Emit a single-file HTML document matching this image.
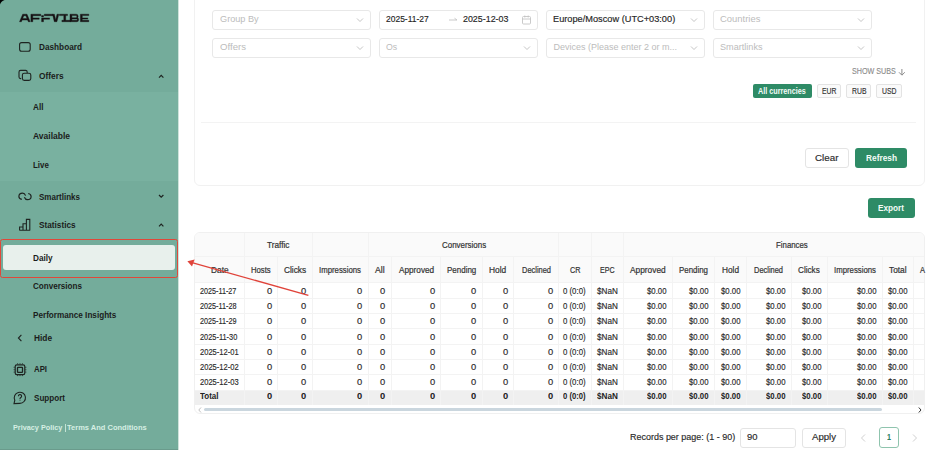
<!DOCTYPE html>
<html><head><meta charset="utf-8"><style>
html,body{margin:0;padding:0;}
body{width:940px;height:450px;overflow:hidden;position:relative;background:#fff;font-family:"Liberation Sans",sans-serif;}
.t{position:absolute;white-space:nowrap;line-height:1;transform-origin:0 50%;}
.b{position:absolute;}
</style></head><body>
<div class="b" style="left:0.00px;top:0.00px;width:178.00px;height:450.00px;background:#74ac9b;"></div>
<div class="b" style="left:0.00px;top:92.00px;width:178.00px;height:89.30px;background:#79b1a0;"></div>
<div class="b" style="left:178.00px;top:0.00px;width:1.00px;height:450.00px;background:#cfe3db;"></div>
<div class="b" style="left:0.00px;top:449.00px;width:178.00px;height:1.00px;background:#6a9b8c;"></div>
<svg class="b" style="left:0;top:0" width="6" height="6"><path d="M0 0H4.6Q1 1 0 4.6Z" fill="#000"/></svg>
<svg class="b" style="left:0;top:0" width="100" height="30" fill="#161214" stroke="#161214" stroke-width="0.4" stroke-linejoin="miter">
<path fill-rule="evenodd" d="M19.5 21.7L22.7 14.2H27L30.2 21.7H28.3L27.6 20H22.1L21.4 21.7ZM22.7 18.6H27L25.9 15.7H23.8Z"/>
<path d="M30.9 14.2h9.9v1.5h-8v2.2h6.4v1.3h-6.4v2.5h-1.9Z"/>
<path d="M41.6 17.9h8v1.3h-6.1v2.5h-1.9ZM41.6 15.6h1.9v1.4h-1.9ZM44.3 14.2h8.6v1.5h-8.6Z"/>
<path d="M52.5 14.2H54.4L55.7 20L57 14.2H58.8L56.9 21.7H54.3Z"/>
<path d="M59.4 14.2h8.1v1.4h-1.8v4.7h4.8v1.4h-8.6v-1.4h1.9v-4.7h-4.4Z"/>
<path fill-rule="evenodd" d="M70 14.2h6.2a1.9 1.9 0 0 1 1.9 1.9v0.6a1.2 1.2 0 0 1-0.6 1.1a1.5 1.5 0 0 1 1.1 1.4v0.8a1.7 1.7 0 0 1-1.7 1.7h-6.9ZM71.9 15.6v2.1h4.3a0.6 0.6 0 0 0 0.6-0.6v-0.9a0.6 0.6 0 0 0-0.6-0.6ZM71.9 19v1.3h4.9a0.5 0.5 0 0 0 0.5-0.5v-0.3a0.5 0.5 0 0 0-0.5-0.5Z"/>
<path d="M80.4 14.2h8.4v1.4h-6.5v2.3h5.5v1.2h-5.5v1.2h6.5v1.4h-8.4Z"/>
</svg>
<svg class="b" style="left:0;top:0" width="178" height="450" fill="none" stroke="#1e2421" stroke-width="1.1">
<rect x="19.6" y="42.6" width="10.6" height="8.6" rx="2"/>
<rect x="22.4" y="73.2" width="8.4" height="7.2" rx="1.8"/>
<path d="M21.2 78.6h-0.6a1.6 1.6 0 0 1-1.6-1.6v-5a1.6 1.6 0 0 1 1.6-1.6h5a1.6 1.6 0 0 1 1.6 1.6v1"/>
<path d="M159 77.6l2.2-2.2 2.2 2.2" stroke-width="1.2"/>
<path d="M21.8 199.3C19.8 198.9 18.9 197.8 18.9 196.4C18.9 194.5 20.6 193.2 22.6 193.2C24.1 193.2 25 194.1 25.6 195.6M24.4 197.2C25 198.7 25.9 199.6 27.4 199.6C29.4 199.6 31.1 198.3 31.1 196.4C31.1 195 30.2 193.9 28.2 193.5" stroke-width="1.2"/>
<path d="M159 195l2.2 2.2 2.2-2.2" stroke-width="1.2"/>
<path d="M19.6 230.2v-3.2h3.4v3.2M23 230.2v-6.4h3.4v6.4M26.4 230.2v-10.8h3.4v10.8M19.4 230.2h10.8"/>
<path d="M159 226.4l2.2-2.2 2.2 2.2" stroke-width="1.2"/>
<path d="M21.4 334.8l-3 3.2 3 3.2" stroke-width="1.1"/>
<rect x="15.2" y="364.8" width="9.6" height="9.8" rx="1.6" stroke-width="1.2"/>
<path d="M17.6 364.2v-0.9M20 364.2v-0.9M22.4 364.2v-0.9M17.6 375.2v0.9M20 375.2v0.9M22.4 375.2v0.9M14.6 367.3h-0.9M14.6 369.7h-0.9M14.6 372.1h-0.9M25.4 367.3h0.9M25.4 369.7h0.9M25.4 372.1h0.9" stroke-width="0.9"/>
<rect x="17.5" y="367.3" width="5" height="5" rx="0.6" stroke-width="1.3"/>
<path d="M19.8 403.4a5.6 5.6 0 1 0 -5-3.2l-0.8 3.4z"/>
<path d="M18.4 396.2a1.6 1.6 0 1 1 2.4 1.4c-0.5 0.3-0.8 0.6-0.8 1.2v0.4M20 400.6v0.3"/>
</svg>
<div class="t" style="left:39.00px;top:42.70px;font-size:8.8px;color:#1b1d1c;font-weight:bold;transform:scaleX(0.9355);">Dashboard</div>
<div class="t" style="left:39.00px;top:71.70px;font-size:8.8px;color:#1b1d1c;font-weight:bold;transform:scaleX(0.9491);">Offers</div>
<div class="t" style="left:33.00px;top:103.10px;font-size:8.8px;color:#1b1d1c;font-weight:bold;transform:scaleX(0.9249);">All</div>
<div class="t" style="left:33.00px;top:131.90px;font-size:8.8px;color:#1b1d1c;font-weight:bold;transform:scaleX(0.9657);">Available</div>
<div class="t" style="left:33.00px;top:161.30px;font-size:8.8px;color:#1b1d1c;font-weight:bold;transform:scaleX(0.8973);">Live</div>
<div class="t" style="left:39.00px;top:192.90px;font-size:8.8px;color:#1b1d1c;font-weight:bold;transform:scaleX(0.9112);">Smartlinks</div>
<div class="t" style="left:39.00px;top:221.30px;font-size:8.8px;color:#1b1d1c;font-weight:bold;transform:scaleX(0.9354);">Statistics</div>
<div class="b" style="left:0.00px;top:239.20px;width:178.40px;height:38.40px;border:1.5px solid #e0483a;border-radius:2.5px;box-sizing:border-box;"></div>
<div class="b" style="left:2.80px;top:244.60px;width:172.40px;height:25.40px;background:#e8f0ec;border-radius:3px;"></div>
<div class="t" style="left:33.40px;top:253.50px;font-size:8.8px;color:#1b1d1c;font-weight:bold;transform:scaleX(0.9319);">Daily</div>
<div class="t" style="left:33.00px;top:282.30px;font-size:8.8px;color:#1b1d1c;font-weight:bold;transform:scaleX(0.9193);">Conversions</div>
<div class="t" style="left:33.00px;top:310.70px;font-size:8.8px;color:#1b1d1c;font-weight:bold;transform:scaleX(0.9268);">Performance Insights</div>
<div class="t" style="left:34.00px;top:333.70px;font-size:8.8px;color:#1b1d1c;font-weight:bold;transform:scaleX(0.9439);">Hide</div>
<div class="t" style="left:34.00px;top:365.30px;font-size:8.8px;color:#1b1d1c;font-weight:bold;transform:scaleX(0.8862);">API</div>
<div class="t" style="left:34.00px;top:393.70px;font-size:8.8px;color:#1b1d1c;font-weight:bold;transform:scaleX(0.9191);">Support</div>
<div class="t" style="left:13.00px;top:424.09px;font-size:8px;color:#d6efe3;font-weight:bold;transform:scaleX(0.9105);">Privacy Policy</div>
<div class="b" style="left:64.80px;top:424.40px;width:0.70px;height:7.40px;background:#c4e3d5;"></div>
<div class="t" style="left:67.00px;top:424.09px;font-size:8px;color:#d6efe3;font-weight:bold;transform:scaleX(0.9389);">Terms And Conditions</div>
<div class="b" style="left:194.40px;top:-10.00px;width:730.20px;height:195.60px;border:1px solid #f1f1f1;border-radius:6px;box-sizing:border-box;background:#fff;"></div>
<div class="b" style="left:212.40px;top:9.60px;width:158.80px;height:20.00px;border:1px solid #e8e8e8;border-radius:3px;box-sizing:border-box;"></div>
<svg class="b" style="left:356.20px;top:15.60px" width="8" height="8" fill="none" stroke="#bdbdbd" stroke-width="0.9"><path d="M1 2.5l3 3 3-3"/></svg>
<div class="b" style="left:212.40px;top:37.60px;width:158.80px;height:20.00px;border:1px solid #e8e8e8;border-radius:3px;box-sizing:border-box;"></div>
<svg class="b" style="left:356.20px;top:43.60px" width="8" height="8" fill="none" stroke="#bdbdbd" stroke-width="0.9"><path d="M1 2.5l3 3 3-3"/></svg>
<div class="b" style="left:379.20px;top:9.60px;width:158.80px;height:20.00px;border:1px solid #e8e8e8;border-radius:3px;box-sizing:border-box;"></div>
<div class="b" style="left:379.20px;top:37.60px;width:158.80px;height:20.00px;border:1px solid #e8e8e8;border-radius:3px;box-sizing:border-box;"></div>
<svg class="b" style="left:523.00px;top:43.60px" width="8" height="8" fill="none" stroke="#bdbdbd" stroke-width="0.9"><path d="M1 2.5l3 3 3-3"/></svg>
<div class="b" style="left:545.80px;top:9.60px;width:158.80px;height:20.00px;border:1px solid #e8e8e8;border-radius:3px;box-sizing:border-box;"></div>
<svg class="b" style="left:689.60px;top:15.60px" width="8" height="8" fill="none" stroke="#bdbdbd" stroke-width="0.9"><path d="M1 2.5l3 3 3-3"/></svg>
<div class="b" style="left:545.80px;top:37.60px;width:158.80px;height:20.00px;border:1px solid #e8e8e8;border-radius:3px;box-sizing:border-box;"></div>
<svg class="b" style="left:689.60px;top:43.60px" width="8" height="8" fill="none" stroke="#bdbdbd" stroke-width="0.9"><path d="M1 2.5l3 3 3-3"/></svg>
<div class="b" style="left:712.80px;top:9.60px;width:158.80px;height:20.00px;border:1px solid #e8e8e8;border-radius:3px;box-sizing:border-box;"></div>
<svg class="b" style="left:856.60px;top:15.60px" width="8" height="8" fill="none" stroke="#bdbdbd" stroke-width="0.9"><path d="M1 2.5l3 3 3-3"/></svg>
<div class="b" style="left:712.80px;top:37.60px;width:158.80px;height:20.00px;border:1px solid #e8e8e8;border-radius:3px;box-sizing:border-box;"></div>
<svg class="b" style="left:856.60px;top:43.60px" width="8" height="8" fill="none" stroke="#bdbdbd" stroke-width="0.9"><path d="M1 2.5l3 3 3-3"/></svg>
<div class="t" style="left:219.70px;top:15.10px;font-size:9px;color:#bcbcbc;transform:scaleX(1.0179);">Group By</div>
<div class="t" style="left:219.70px;top:43.10px;font-size:9px;color:#bcbcbc;transform:scaleX(1.0681);">Offers</div>
<div class="t" style="left:386.30px;top:15.10px;font-size:9px;color:#262626;transform:scaleX(0.9411);-webkit-text-stroke:0.15px currentColor;">2025-11-27</div>
<div class="t" style="left:462.90px;top:15.10px;font-size:9px;color:#262626;transform:scaleX(0.9861);-webkit-text-stroke:0.15px currentColor;">2025-12-03</div>
<svg class="b" style="left:448px;top:16px" width="10" height="6" fill="none" stroke="#c4c4c4" stroke-width="0.9"><path d="M1 4h8M6.5 2.2L9 4"/></svg>
<svg class="b" style="left:521px;top:15px" width="11" height="11" fill="none" stroke="#c4c4c4" stroke-width="0.9"><rect x="1.5" y="1.5" width="8" height="7.5" rx="1"/><path d="M1.5 4h8M3.8 0.5v2M7.2 0.5v2"/></svg>
<div class="t" style="left:386.00px;top:43.10px;font-size:9px;color:#bcbcbc;transform:scaleX(0.9739);">Os</div>
<div class="t" style="left:553.40px;top:15.10px;font-size:9px;color:#262626;transform:scaleX(1.0243);-webkit-text-stroke:0.15px currentColor;">Europe/Moscow (UTC+03:00)</div>
<div class="t" style="left:553.40px;top:43.10px;font-size:9px;color:#bcbcbc;">Devices (Please enter 2 or m...</div>
<div class="t" style="left:720.40px;top:15.10px;font-size:9px;color:#bcbcbc;transform:scaleX(1.0488);">Countries</div>
<div class="t" style="left:720.40px;top:43.10px;font-size:9px;color:#bcbcbc;transform:scaleX(1.0117);">Smartlinks</div>
<div class="t" style="left:852.40px;top:66.90px;font-size:8.4px;color:#8a8a8a;transform:scaleX(0.8570);-webkit-text-stroke:0.12px currentColor;">SHOW SUBS</div>
<svg class="b" style="left:897.7px;top:68px" width="9" height="8" fill="none" stroke="#8a8a8a" stroke-width="1"><path d="M3.9 1v6M1 4.3l2.9 2.9 2.9-2.9"/></svg>
<div class="b" style="left:752.60px;top:84.20px;width:59.00px;height:13.60px;background:#2e8b66;border-radius:2px;"></div>
<div class="t" style="left:758.20px;top:86.80px;font-size:8.6px;color:#f4fbf7;font-weight:bold;transform:scaleX(0.8403);">All currencies</div>
<div class="b" style="left:816.60px;top:84.20px;width:24.30px;height:13.60px;background:#fafafa;border:1px solid #e3e3e3;border-radius:2px;box-sizing:border-box;"></div>
<div class="t" style="left:821.50px;top:86.90px;font-size:8.4px;color:#333;transform:scaleX(0.8176);-webkit-text-stroke:0.15px currentColor;">EUR</div>
<div class="b" style="left:846.30px;top:84.20px;width:24.90px;height:13.60px;background:#fafafa;border:1px solid #e3e3e3;border-radius:2px;box-sizing:border-box;"></div>
<div class="t" style="left:851.50px;top:86.90px;font-size:8.4px;color:#333;transform:scaleX(0.8176);-webkit-text-stroke:0.15px currentColor;">RUB</div>
<div class="b" style="left:876.30px;top:84.20px;width:25.50px;height:13.60px;background:#fafafa;border:1px solid #e3e3e3;border-radius:2px;box-sizing:border-box;"></div>
<div class="t" style="left:881.80px;top:86.90px;font-size:8.4px;color:#333;transform:scaleX(0.8176);-webkit-text-stroke:0.15px currentColor;">USD</div>
<div class="b" style="left:201.00px;top:121.60px;width:715.40px;height:1.00px;background:#f3f3f3;"></div>
<div class="b" style="left:805.30px;top:147.50px;width:43.50px;height:20.50px;background:#fff;border:1px solid #e4e4e4;border-radius:3px;box-sizing:border-box;"></div>
<div class="t" style="left:815.30px;top:153.50px;font-size:8.8px;color:#2a2a2a;transform:scaleX(1.1127);-webkit-text-stroke:0.15px currentColor;">Clear</div>
<div class="b" style="left:855.20px;top:147.50px;width:51.80px;height:20.50px;background:#2e8b66;border-radius:3px;"></div>
<div class="t" style="left:865.60px;top:153.50px;font-size:8.8px;color:#f4fbf7;font-weight:bold;transform:scaleX(0.9460);">Refresh</div>
<div class="b" style="left:867.80px;top:198.40px;width:47.10px;height:20.00px;background:#2e8b66;border-radius:3px;"></div>
<div class="t" style="left:878.30px;top:204.10px;font-size:8.8px;color:#f4fbf7;font-weight:bold;transform:scaleX(0.9329);">Export</div>
<div class="b" style="left:194.4px;top:231.5px;width:730.20px;height:182.70px;border:1px solid #f0f0f0;border-radius:6px;box-sizing:border-box;overflow:hidden;background:#fff;">
</div>
<div class="b" style="left:195.40px;top:232.50px;width:728.20px;height:50.40px;background:#fafafa;border-radius:5px 5px 0 0;"></div>
<div class="b" style="left:195.40px;top:390.00px;width:728.20px;height:15.30px;background:#efefef;"></div>
<div class="b" style="left:195.40px;top:256.20px;width:728.20px;height:1.00px;background:#f3f3f3;"></div>
<div class="b" style="left:195.40px;top:282.40px;width:728.20px;height:1.00px;background:#f3f3f3;"></div>
<div class="b" style="left:195.40px;top:297.70px;width:728.20px;height:1.00px;background:#f3f3f3;"></div>
<div class="b" style="left:195.40px;top:313.00px;width:728.20px;height:1.00px;background:#f3f3f3;"></div>
<div class="b" style="left:195.40px;top:328.30px;width:728.20px;height:1.00px;background:#f3f3f3;"></div>
<div class="b" style="left:195.40px;top:343.60px;width:728.20px;height:1.00px;background:#f3f3f3;"></div>
<div class="b" style="left:195.40px;top:358.90px;width:728.20px;height:1.00px;background:#f3f3f3;"></div>
<div class="b" style="left:195.40px;top:374.20px;width:728.20px;height:1.00px;background:#f3f3f3;"></div>
<div class="b" style="left:195.40px;top:389.50px;width:728.20px;height:1.00px;background:#f3f3f3;"></div>
<div class="b" style="left:243.80px;top:232.50px;width:1.00px;height:172.80px;background:#f3f3f3;"></div>
<div class="b" style="left:277.40px;top:256.70px;width:1.00px;height:148.60px;background:#f3f3f3;"></div>
<div class="b" style="left:311.80px;top:232.50px;width:1.00px;height:172.80px;background:#f3f3f3;"></div>
<div class="b" style="left:368.00px;top:232.50px;width:1.00px;height:172.80px;background:#f3f3f3;"></div>
<div class="b" style="left:390.80px;top:256.70px;width:1.00px;height:148.60px;background:#f3f3f3;"></div>
<div class="b" style="left:440.40px;top:256.70px;width:1.00px;height:148.60px;background:#f3f3f3;"></div>
<div class="b" style="left:481.80px;top:256.70px;width:1.00px;height:148.60px;background:#f3f3f3;"></div>
<div class="b" style="left:513.10px;top:256.70px;width:1.00px;height:148.60px;background:#f3f3f3;"></div>
<div class="b" style="left:558.10px;top:232.50px;width:1.00px;height:172.80px;background:#f3f3f3;"></div>
<div class="b" style="left:591.00px;top:232.50px;width:1.00px;height:172.80px;background:#f3f3f3;"></div>
<div class="b" style="left:623.00px;top:232.50px;width:1.00px;height:172.80px;background:#f3f3f3;"></div>
<div class="b" style="left:672.30px;top:256.70px;width:1.00px;height:148.60px;background:#f3f3f3;"></div>
<div class="b" style="left:714.10px;top:256.70px;width:1.00px;height:148.60px;background:#f3f3f3;"></div>
<div class="b" style="left:745.70px;top:256.70px;width:1.00px;height:148.60px;background:#f3f3f3;"></div>
<div class="b" style="left:790.90px;top:256.70px;width:1.00px;height:148.60px;background:#f3f3f3;"></div>
<div class="b" style="left:826.50px;top:256.70px;width:1.00px;height:148.60px;background:#f3f3f3;"></div>
<div class="b" style="left:882.10px;top:256.70px;width:1.00px;height:148.60px;background:#f3f3f3;"></div>
<div class="b" style="left:913.30px;top:256.70px;width:1.00px;height:148.60px;background:#f3f3f3;"></div>
<div class="t" style="left:266.85px;top:241.00px;font-size:8.6px;color:#333333;transform:scaleX(0.9609);-webkit-text-stroke:0.2px currentColor;">Traffic</div>
<div class="t" style="left:441.50px;top:241.00px;font-size:8.6px;color:#333333;transform:scaleX(0.9247);-webkit-text-stroke:0.2px currentColor;">Conversions</div>
<div class="t" style="left:775.50px;top:241.00px;font-size:8.6px;color:#333333;transform:scaleX(0.9113);-webkit-text-stroke:0.2px currentColor;">Finances</div>
<div class="t" style="left:210.55px;top:266.10px;font-size:8.6px;color:#333333;transform:scaleX(0.9688);-webkit-text-stroke:0.2px currentColor;">Date</div>
<div class="t" style="left:251.25px;top:266.10px;font-size:8.6px;color:#333333;transform:scaleX(0.8961);-webkit-text-stroke:0.2px currentColor;">Hosts</div>
<div class="t" style="left:284.00px;top:266.10px;font-size:8.6px;color:#333333;transform:scaleX(0.9681);-webkit-text-stroke:0.2px currentColor;">Clicks</div>
<div class="t" style="left:319.40px;top:266.10px;font-size:8.6px;color:#333333;transform:scaleX(0.9059);-webkit-text-stroke:0.2px currentColor;">Impressions</div>
<div class="t" style="left:375.05px;top:266.10px;font-size:8.6px;color:#333333;transform:scaleX(1.0148);-webkit-text-stroke:0.2px currentColor;">All</div>
<div class="t" style="left:398.50px;top:266.10px;font-size:8.6px;color:#333333;transform:scaleX(0.9561);-webkit-text-stroke:0.2px currentColor;">Approved</div>
<div class="t" style="left:446.95px;top:266.10px;font-size:8.6px;color:#333333;transform:scaleX(0.9283);-webkit-text-stroke:0.2px currentColor;">Pending</div>
<div class="t" style="left:489.35px;top:266.10px;font-size:8.6px;color:#333333;transform:scaleX(0.9724);-webkit-text-stroke:0.2px currentColor;">Hold</div>
<div class="t" style="left:521.60px;top:266.10px;font-size:8.6px;color:#333333;transform:scaleX(0.8666);-webkit-text-stroke:0.2px currentColor;">Declined</div>
<div class="t" style="left:569.80px;top:266.10px;font-size:8.6px;color:#333333;transform:scaleX(0.8453);-webkit-text-stroke:0.2px currentColor;">CR</div>
<div class="t" style="left:600.20px;top:266.10px;font-size:8.6px;color:#333333;transform:scaleX(0.8256);-webkit-text-stroke:0.2px currentColor;">EPC</div>
<div class="t" style="left:630.30px;top:266.10px;font-size:8.6px;color:#333333;transform:scaleX(0.9697);-webkit-text-stroke:0.2px currentColor;">Approved</div>
<div class="t" style="left:679.20px;top:266.10px;font-size:8.6px;color:#333333;transform:scaleX(0.9188);-webkit-text-stroke:0.2px currentColor;">Pending</div>
<div class="t" style="left:721.90px;top:266.10px;font-size:8.6px;color:#333333;transform:scaleX(0.9611);-webkit-text-stroke:0.2px currentColor;">Hold</div>
<div class="t" style="left:754.30px;top:266.10px;font-size:8.6px;color:#333333;transform:scaleX(0.8666);-webkit-text-stroke:0.2px currentColor;">Declined</div>
<div class="t" style="left:798.30px;top:266.10px;font-size:8.6px;color:#333333;transform:scaleX(0.9506);-webkit-text-stroke:0.2px currentColor;">Clicks</div>
<div class="t" style="left:833.80px;top:266.10px;font-size:8.6px;color:#333333;transform:scaleX(0.9059);-webkit-text-stroke:0.2px currentColor;">Impressions</div>
<div class="t" style="left:889.40px;top:266.10px;font-size:8.6px;color:#333333;transform:scaleX(0.9688);-webkit-text-stroke:0.2px currentColor;">Total</div>
<div class="t" style="left:919.60px;top:266.10px;font-size:8.6px;color:#333333;transform:scaleX(0.8716);-webkit-text-stroke:0.2px currentColor;">A</div>
<div class="t" style="left:199.70px;top:286.65px;font-size:8.8px;color:#2a2a2a;transform:scaleX(0.8205);-webkit-text-stroke:0.15px currentColor;">2025-11-27</div>
<div class="t" style="left:266.80px;top:286.65px;font-size:8.8px;color:#2a2a2a;transform:scaleX(1.0625);-webkit-text-stroke:0.15px currentColor;">0</div>
<div class="t" style="left:301.20px;top:286.65px;font-size:8.8px;color:#2a2a2a;transform:scaleX(1.0625);-webkit-text-stroke:0.15px currentColor;">0</div>
<div class="t" style="left:357.40px;top:286.65px;font-size:8.8px;color:#2a2a2a;transform:scaleX(1.0625);-webkit-text-stroke:0.15px currentColor;">0</div>
<div class="t" style="left:380.20px;top:286.65px;font-size:8.8px;color:#2a2a2a;transform:scaleX(1.0625);-webkit-text-stroke:0.15px currentColor;">0</div>
<div class="t" style="left:429.80px;top:286.65px;font-size:8.8px;color:#2a2a2a;transform:scaleX(1.0625);-webkit-text-stroke:0.15px currentColor;">0</div>
<div class="t" style="left:471.20px;top:286.65px;font-size:8.8px;color:#2a2a2a;transform:scaleX(1.0625);-webkit-text-stroke:0.15px currentColor;">0</div>
<div class="t" style="left:502.50px;top:286.65px;font-size:8.8px;color:#2a2a2a;transform:scaleX(1.0625);-webkit-text-stroke:0.15px currentColor;">0</div>
<div class="t" style="left:547.50px;top:286.65px;font-size:8.8px;color:#2a2a2a;transform:scaleX(1.0625);-webkit-text-stroke:0.15px currentColor;">0</div>
<div class="t" style="left:563.00px;top:286.65px;font-size:8.8px;color:#2a2a2a;transform:scaleX(0.8886);-webkit-text-stroke:0.15px currentColor;">0 (0:0)</div>
<div class="t" style="left:596.80px;top:286.65px;font-size:8.8px;color:#2a2a2a;transform:scaleX(0.9245);-webkit-text-stroke:0.15px currentColor;">$NaN</div>
<div class="t" style="left:647.40px;top:286.65px;font-size:8.8px;color:#2a2a2a;transform:scaleX(0.8855);-webkit-text-stroke:0.15px currentColor;">$0.00</div>
<div class="t" style="left:689.20px;top:286.65px;font-size:8.8px;color:#2a2a2a;transform:scaleX(0.8855);-webkit-text-stroke:0.15px currentColor;">$0.00</div>
<div class="t" style="left:720.80px;top:286.65px;font-size:8.8px;color:#2a2a2a;transform:scaleX(0.8855);-webkit-text-stroke:0.15px currentColor;">$0.00</div>
<div class="t" style="left:766.00px;top:286.65px;font-size:8.8px;color:#2a2a2a;transform:scaleX(0.8855);-webkit-text-stroke:0.15px currentColor;">$0.00</div>
<div class="t" style="left:801.60px;top:286.65px;font-size:8.8px;color:#2a2a2a;transform:scaleX(0.8855);-webkit-text-stroke:0.15px currentColor;">$0.00</div>
<div class="t" style="left:857.20px;top:286.65px;font-size:8.8px;color:#2a2a2a;transform:scaleX(0.8855);-webkit-text-stroke:0.15px currentColor;">$0.00</div>
<div class="t" style="left:888.40px;top:286.65px;font-size:8.8px;color:#2a2a2a;transform:scaleX(0.8855);-webkit-text-stroke:0.15px currentColor;">$0.00</div>
<div class="t" style="left:199.70px;top:301.95px;font-size:8.8px;color:#2a2a2a;transform:scaleX(0.8228);-webkit-text-stroke:0.15px currentColor;">2025-11-28</div>
<div class="t" style="left:266.80px;top:301.95px;font-size:8.8px;color:#2a2a2a;transform:scaleX(1.0625);-webkit-text-stroke:0.15px currentColor;">0</div>
<div class="t" style="left:301.20px;top:301.95px;font-size:8.8px;color:#2a2a2a;transform:scaleX(1.0625);-webkit-text-stroke:0.15px currentColor;">0</div>
<div class="t" style="left:357.40px;top:301.95px;font-size:8.8px;color:#2a2a2a;transform:scaleX(1.0625);-webkit-text-stroke:0.15px currentColor;">0</div>
<div class="t" style="left:380.20px;top:301.95px;font-size:8.8px;color:#2a2a2a;transform:scaleX(1.0625);-webkit-text-stroke:0.15px currentColor;">0</div>
<div class="t" style="left:429.80px;top:301.95px;font-size:8.8px;color:#2a2a2a;transform:scaleX(1.0625);-webkit-text-stroke:0.15px currentColor;">0</div>
<div class="t" style="left:471.20px;top:301.95px;font-size:8.8px;color:#2a2a2a;transform:scaleX(1.0625);-webkit-text-stroke:0.15px currentColor;">0</div>
<div class="t" style="left:502.50px;top:301.95px;font-size:8.8px;color:#2a2a2a;transform:scaleX(1.0625);-webkit-text-stroke:0.15px currentColor;">0</div>
<div class="t" style="left:547.50px;top:301.95px;font-size:8.8px;color:#2a2a2a;transform:scaleX(1.0625);-webkit-text-stroke:0.15px currentColor;">0</div>
<div class="t" style="left:563.00px;top:301.95px;font-size:8.8px;color:#2a2a2a;transform:scaleX(0.8886);-webkit-text-stroke:0.15px currentColor;">0 (0:0)</div>
<div class="t" style="left:596.80px;top:301.95px;font-size:8.8px;color:#2a2a2a;transform:scaleX(0.9245);-webkit-text-stroke:0.15px currentColor;">$NaN</div>
<div class="t" style="left:647.40px;top:301.95px;font-size:8.8px;color:#2a2a2a;transform:scaleX(0.8855);-webkit-text-stroke:0.15px currentColor;">$0.00</div>
<div class="t" style="left:689.20px;top:301.95px;font-size:8.8px;color:#2a2a2a;transform:scaleX(0.8855);-webkit-text-stroke:0.15px currentColor;">$0.00</div>
<div class="t" style="left:720.80px;top:301.95px;font-size:8.8px;color:#2a2a2a;transform:scaleX(0.8855);-webkit-text-stroke:0.15px currentColor;">$0.00</div>
<div class="t" style="left:766.00px;top:301.95px;font-size:8.8px;color:#2a2a2a;transform:scaleX(0.8855);-webkit-text-stroke:0.15px currentColor;">$0.00</div>
<div class="t" style="left:801.60px;top:301.95px;font-size:8.8px;color:#2a2a2a;transform:scaleX(0.8855);-webkit-text-stroke:0.15px currentColor;">$0.00</div>
<div class="t" style="left:857.20px;top:301.95px;font-size:8.8px;color:#2a2a2a;transform:scaleX(0.8855);-webkit-text-stroke:0.15px currentColor;">$0.00</div>
<div class="t" style="left:888.40px;top:301.95px;font-size:8.8px;color:#2a2a2a;transform:scaleX(0.8855);-webkit-text-stroke:0.15px currentColor;">$0.00</div>
<div class="t" style="left:199.70px;top:317.25px;font-size:8.8px;color:#2a2a2a;transform:scaleX(0.8228);-webkit-text-stroke:0.15px currentColor;">2025-11-29</div>
<div class="t" style="left:266.80px;top:317.25px;font-size:8.8px;color:#2a2a2a;transform:scaleX(1.0625);-webkit-text-stroke:0.15px currentColor;">0</div>
<div class="t" style="left:301.20px;top:317.25px;font-size:8.8px;color:#2a2a2a;transform:scaleX(1.0625);-webkit-text-stroke:0.15px currentColor;">0</div>
<div class="t" style="left:357.40px;top:317.25px;font-size:8.8px;color:#2a2a2a;transform:scaleX(1.0625);-webkit-text-stroke:0.15px currentColor;">0</div>
<div class="t" style="left:380.20px;top:317.25px;font-size:8.8px;color:#2a2a2a;transform:scaleX(1.0625);-webkit-text-stroke:0.15px currentColor;">0</div>
<div class="t" style="left:429.80px;top:317.25px;font-size:8.8px;color:#2a2a2a;transform:scaleX(1.0625);-webkit-text-stroke:0.15px currentColor;">0</div>
<div class="t" style="left:471.20px;top:317.25px;font-size:8.8px;color:#2a2a2a;transform:scaleX(1.0625);-webkit-text-stroke:0.15px currentColor;">0</div>
<div class="t" style="left:502.50px;top:317.25px;font-size:8.8px;color:#2a2a2a;transform:scaleX(1.0625);-webkit-text-stroke:0.15px currentColor;">0</div>
<div class="t" style="left:547.50px;top:317.25px;font-size:8.8px;color:#2a2a2a;transform:scaleX(1.0625);-webkit-text-stroke:0.15px currentColor;">0</div>
<div class="t" style="left:563.00px;top:317.25px;font-size:8.8px;color:#2a2a2a;transform:scaleX(0.8886);-webkit-text-stroke:0.15px currentColor;">0 (0:0)</div>
<div class="t" style="left:596.80px;top:317.25px;font-size:8.8px;color:#2a2a2a;transform:scaleX(0.9245);-webkit-text-stroke:0.15px currentColor;">$NaN</div>
<div class="t" style="left:647.40px;top:317.25px;font-size:8.8px;color:#2a2a2a;transform:scaleX(0.8855);-webkit-text-stroke:0.15px currentColor;">$0.00</div>
<div class="t" style="left:689.20px;top:317.25px;font-size:8.8px;color:#2a2a2a;transform:scaleX(0.8855);-webkit-text-stroke:0.15px currentColor;">$0.00</div>
<div class="t" style="left:720.80px;top:317.25px;font-size:8.8px;color:#2a2a2a;transform:scaleX(0.8855);-webkit-text-stroke:0.15px currentColor;">$0.00</div>
<div class="t" style="left:766.00px;top:317.25px;font-size:8.8px;color:#2a2a2a;transform:scaleX(0.8855);-webkit-text-stroke:0.15px currentColor;">$0.00</div>
<div class="t" style="left:801.60px;top:317.25px;font-size:8.8px;color:#2a2a2a;transform:scaleX(0.8855);-webkit-text-stroke:0.15px currentColor;">$0.00</div>
<div class="t" style="left:857.20px;top:317.25px;font-size:8.8px;color:#2a2a2a;transform:scaleX(0.8855);-webkit-text-stroke:0.15px currentColor;">$0.00</div>
<div class="t" style="left:888.40px;top:317.25px;font-size:8.8px;color:#2a2a2a;transform:scaleX(0.8855);-webkit-text-stroke:0.15px currentColor;">$0.00</div>
<div class="t" style="left:199.70px;top:332.55px;font-size:8.8px;color:#2a2a2a;transform:scaleX(0.8408);-webkit-text-stroke:0.15px currentColor;">2025-11-30</div>
<div class="t" style="left:266.80px;top:332.55px;font-size:8.8px;color:#2a2a2a;transform:scaleX(1.0625);-webkit-text-stroke:0.15px currentColor;">0</div>
<div class="t" style="left:301.20px;top:332.55px;font-size:8.8px;color:#2a2a2a;transform:scaleX(1.0625);-webkit-text-stroke:0.15px currentColor;">0</div>
<div class="t" style="left:357.40px;top:332.55px;font-size:8.8px;color:#2a2a2a;transform:scaleX(1.0625);-webkit-text-stroke:0.15px currentColor;">0</div>
<div class="t" style="left:380.20px;top:332.55px;font-size:8.8px;color:#2a2a2a;transform:scaleX(1.0625);-webkit-text-stroke:0.15px currentColor;">0</div>
<div class="t" style="left:429.80px;top:332.55px;font-size:8.8px;color:#2a2a2a;transform:scaleX(1.0625);-webkit-text-stroke:0.15px currentColor;">0</div>
<div class="t" style="left:471.20px;top:332.55px;font-size:8.8px;color:#2a2a2a;transform:scaleX(1.0625);-webkit-text-stroke:0.15px currentColor;">0</div>
<div class="t" style="left:502.50px;top:332.55px;font-size:8.8px;color:#2a2a2a;transform:scaleX(1.0625);-webkit-text-stroke:0.15px currentColor;">0</div>
<div class="t" style="left:547.50px;top:332.55px;font-size:8.8px;color:#2a2a2a;transform:scaleX(1.0625);-webkit-text-stroke:0.15px currentColor;">0</div>
<div class="t" style="left:563.00px;top:332.55px;font-size:8.8px;color:#2a2a2a;transform:scaleX(0.8886);-webkit-text-stroke:0.15px currentColor;">0 (0:0)</div>
<div class="t" style="left:596.80px;top:332.55px;font-size:8.8px;color:#2a2a2a;transform:scaleX(0.9245);-webkit-text-stroke:0.15px currentColor;">$NaN</div>
<div class="t" style="left:647.40px;top:332.55px;font-size:8.8px;color:#2a2a2a;transform:scaleX(0.8855);-webkit-text-stroke:0.15px currentColor;">$0.00</div>
<div class="t" style="left:689.20px;top:332.55px;font-size:8.8px;color:#2a2a2a;transform:scaleX(0.8855);-webkit-text-stroke:0.15px currentColor;">$0.00</div>
<div class="t" style="left:720.80px;top:332.55px;font-size:8.8px;color:#2a2a2a;transform:scaleX(0.8855);-webkit-text-stroke:0.15px currentColor;">$0.00</div>
<div class="t" style="left:766.00px;top:332.55px;font-size:8.8px;color:#2a2a2a;transform:scaleX(0.8855);-webkit-text-stroke:0.15px currentColor;">$0.00</div>
<div class="t" style="left:801.60px;top:332.55px;font-size:8.8px;color:#2a2a2a;transform:scaleX(0.8855);-webkit-text-stroke:0.15px currentColor;">$0.00</div>
<div class="t" style="left:857.20px;top:332.55px;font-size:8.8px;color:#2a2a2a;transform:scaleX(0.8855);-webkit-text-stroke:0.15px currentColor;">$0.00</div>
<div class="t" style="left:888.40px;top:332.55px;font-size:8.8px;color:#2a2a2a;transform:scaleX(0.8855);-webkit-text-stroke:0.15px currentColor;">$0.00</div>
<div class="t" style="left:199.70px;top:347.85px;font-size:8.8px;color:#2a2a2a;transform:scaleX(0.8575);-webkit-text-stroke:0.15px currentColor;">2025-12-01</div>
<div class="t" style="left:266.80px;top:347.85px;font-size:8.8px;color:#2a2a2a;transform:scaleX(1.0625);-webkit-text-stroke:0.15px currentColor;">0</div>
<div class="t" style="left:301.20px;top:347.85px;font-size:8.8px;color:#2a2a2a;transform:scaleX(1.0625);-webkit-text-stroke:0.15px currentColor;">0</div>
<div class="t" style="left:357.40px;top:347.85px;font-size:8.8px;color:#2a2a2a;transform:scaleX(1.0625);-webkit-text-stroke:0.15px currentColor;">0</div>
<div class="t" style="left:380.20px;top:347.85px;font-size:8.8px;color:#2a2a2a;transform:scaleX(1.0625);-webkit-text-stroke:0.15px currentColor;">0</div>
<div class="t" style="left:429.80px;top:347.85px;font-size:8.8px;color:#2a2a2a;transform:scaleX(1.0625);-webkit-text-stroke:0.15px currentColor;">0</div>
<div class="t" style="left:471.20px;top:347.85px;font-size:8.8px;color:#2a2a2a;transform:scaleX(1.0625);-webkit-text-stroke:0.15px currentColor;">0</div>
<div class="t" style="left:502.50px;top:347.85px;font-size:8.8px;color:#2a2a2a;transform:scaleX(1.0625);-webkit-text-stroke:0.15px currentColor;">0</div>
<div class="t" style="left:547.50px;top:347.85px;font-size:8.8px;color:#2a2a2a;transform:scaleX(1.0625);-webkit-text-stroke:0.15px currentColor;">0</div>
<div class="t" style="left:563.00px;top:347.85px;font-size:8.8px;color:#2a2a2a;transform:scaleX(0.8886);-webkit-text-stroke:0.15px currentColor;">0 (0:0)</div>
<div class="t" style="left:596.80px;top:347.85px;font-size:8.8px;color:#2a2a2a;transform:scaleX(0.9245);-webkit-text-stroke:0.15px currentColor;">$NaN</div>
<div class="t" style="left:647.40px;top:347.85px;font-size:8.8px;color:#2a2a2a;transform:scaleX(0.8855);-webkit-text-stroke:0.15px currentColor;">$0.00</div>
<div class="t" style="left:689.20px;top:347.85px;font-size:8.8px;color:#2a2a2a;transform:scaleX(0.8855);-webkit-text-stroke:0.15px currentColor;">$0.00</div>
<div class="t" style="left:720.80px;top:347.85px;font-size:8.8px;color:#2a2a2a;transform:scaleX(0.8855);-webkit-text-stroke:0.15px currentColor;">$0.00</div>
<div class="t" style="left:766.00px;top:347.85px;font-size:8.8px;color:#2a2a2a;transform:scaleX(0.8855);-webkit-text-stroke:0.15px currentColor;">$0.00</div>
<div class="t" style="left:801.60px;top:347.85px;font-size:8.8px;color:#2a2a2a;transform:scaleX(0.8855);-webkit-text-stroke:0.15px currentColor;">$0.00</div>
<div class="t" style="left:857.20px;top:347.85px;font-size:8.8px;color:#2a2a2a;transform:scaleX(0.8855);-webkit-text-stroke:0.15px currentColor;">$0.00</div>
<div class="t" style="left:888.40px;top:347.85px;font-size:8.8px;color:#2a2a2a;transform:scaleX(0.8855);-webkit-text-stroke:0.15px currentColor;">$0.00</div>
<div class="t" style="left:199.70px;top:363.15px;font-size:8.8px;color:#2a2a2a;transform:scaleX(0.8575);-webkit-text-stroke:0.15px currentColor;">2025-12-02</div>
<div class="t" style="left:266.80px;top:363.15px;font-size:8.8px;color:#2a2a2a;transform:scaleX(1.0625);-webkit-text-stroke:0.15px currentColor;">0</div>
<div class="t" style="left:301.20px;top:363.15px;font-size:8.8px;color:#2a2a2a;transform:scaleX(1.0625);-webkit-text-stroke:0.15px currentColor;">0</div>
<div class="t" style="left:357.40px;top:363.15px;font-size:8.8px;color:#2a2a2a;transform:scaleX(1.0625);-webkit-text-stroke:0.15px currentColor;">0</div>
<div class="t" style="left:380.20px;top:363.15px;font-size:8.8px;color:#2a2a2a;transform:scaleX(1.0625);-webkit-text-stroke:0.15px currentColor;">0</div>
<div class="t" style="left:429.80px;top:363.15px;font-size:8.8px;color:#2a2a2a;transform:scaleX(1.0625);-webkit-text-stroke:0.15px currentColor;">0</div>
<div class="t" style="left:471.20px;top:363.15px;font-size:8.8px;color:#2a2a2a;transform:scaleX(1.0625);-webkit-text-stroke:0.15px currentColor;">0</div>
<div class="t" style="left:502.50px;top:363.15px;font-size:8.8px;color:#2a2a2a;transform:scaleX(1.0625);-webkit-text-stroke:0.15px currentColor;">0</div>
<div class="t" style="left:547.50px;top:363.15px;font-size:8.8px;color:#2a2a2a;transform:scaleX(1.0625);-webkit-text-stroke:0.15px currentColor;">0</div>
<div class="t" style="left:563.00px;top:363.15px;font-size:8.8px;color:#2a2a2a;transform:scaleX(0.8886);-webkit-text-stroke:0.15px currentColor;">0 (0:0)</div>
<div class="t" style="left:596.80px;top:363.15px;font-size:8.8px;color:#2a2a2a;transform:scaleX(0.9245);-webkit-text-stroke:0.15px currentColor;">$NaN</div>
<div class="t" style="left:647.40px;top:363.15px;font-size:8.8px;color:#2a2a2a;transform:scaleX(0.8855);-webkit-text-stroke:0.15px currentColor;">$0.00</div>
<div class="t" style="left:689.20px;top:363.15px;font-size:8.8px;color:#2a2a2a;transform:scaleX(0.8855);-webkit-text-stroke:0.15px currentColor;">$0.00</div>
<div class="t" style="left:720.80px;top:363.15px;font-size:8.8px;color:#2a2a2a;transform:scaleX(0.8855);-webkit-text-stroke:0.15px currentColor;">$0.00</div>
<div class="t" style="left:766.00px;top:363.15px;font-size:8.8px;color:#2a2a2a;transform:scaleX(0.8855);-webkit-text-stroke:0.15px currentColor;">$0.00</div>
<div class="t" style="left:801.60px;top:363.15px;font-size:8.8px;color:#2a2a2a;transform:scaleX(0.8855);-webkit-text-stroke:0.15px currentColor;">$0.00</div>
<div class="t" style="left:857.20px;top:363.15px;font-size:8.8px;color:#2a2a2a;transform:scaleX(0.8855);-webkit-text-stroke:0.15px currentColor;">$0.00</div>
<div class="t" style="left:888.40px;top:363.15px;font-size:8.8px;color:#2a2a2a;transform:scaleX(0.8855);-webkit-text-stroke:0.15px currentColor;">$0.00</div>
<div class="t" style="left:199.70px;top:378.45px;font-size:8.8px;color:#2a2a2a;transform:scaleX(0.8575);-webkit-text-stroke:0.15px currentColor;">2025-12-03</div>
<div class="t" style="left:266.80px;top:378.45px;font-size:8.8px;color:#2a2a2a;transform:scaleX(1.0625);-webkit-text-stroke:0.15px currentColor;">0</div>
<div class="t" style="left:301.20px;top:378.45px;font-size:8.8px;color:#2a2a2a;transform:scaleX(1.0625);-webkit-text-stroke:0.15px currentColor;">0</div>
<div class="t" style="left:357.40px;top:378.45px;font-size:8.8px;color:#2a2a2a;transform:scaleX(1.0625);-webkit-text-stroke:0.15px currentColor;">0</div>
<div class="t" style="left:380.20px;top:378.45px;font-size:8.8px;color:#2a2a2a;transform:scaleX(1.0625);-webkit-text-stroke:0.15px currentColor;">0</div>
<div class="t" style="left:429.80px;top:378.45px;font-size:8.8px;color:#2a2a2a;transform:scaleX(1.0625);-webkit-text-stroke:0.15px currentColor;">0</div>
<div class="t" style="left:471.20px;top:378.45px;font-size:8.8px;color:#2a2a2a;transform:scaleX(1.0625);-webkit-text-stroke:0.15px currentColor;">0</div>
<div class="t" style="left:502.50px;top:378.45px;font-size:8.8px;color:#2a2a2a;transform:scaleX(1.0625);-webkit-text-stroke:0.15px currentColor;">0</div>
<div class="t" style="left:547.50px;top:378.45px;font-size:8.8px;color:#2a2a2a;transform:scaleX(1.0625);-webkit-text-stroke:0.15px currentColor;">0</div>
<div class="t" style="left:563.00px;top:378.45px;font-size:8.8px;color:#2a2a2a;transform:scaleX(0.8886);-webkit-text-stroke:0.15px currentColor;">0 (0:0)</div>
<div class="t" style="left:596.80px;top:378.45px;font-size:8.8px;color:#2a2a2a;transform:scaleX(0.9245);-webkit-text-stroke:0.15px currentColor;">$NaN</div>
<div class="t" style="left:647.40px;top:378.45px;font-size:8.8px;color:#2a2a2a;transform:scaleX(0.8855);-webkit-text-stroke:0.15px currentColor;">$0.00</div>
<div class="t" style="left:689.20px;top:378.45px;font-size:8.8px;color:#2a2a2a;transform:scaleX(0.8855);-webkit-text-stroke:0.15px currentColor;">$0.00</div>
<div class="t" style="left:720.80px;top:378.45px;font-size:8.8px;color:#2a2a2a;transform:scaleX(0.8855);-webkit-text-stroke:0.15px currentColor;">$0.00</div>
<div class="t" style="left:766.00px;top:378.45px;font-size:8.8px;color:#2a2a2a;transform:scaleX(0.8855);-webkit-text-stroke:0.15px currentColor;">$0.00</div>
<div class="t" style="left:801.60px;top:378.45px;font-size:8.8px;color:#2a2a2a;transform:scaleX(0.8855);-webkit-text-stroke:0.15px currentColor;">$0.00</div>
<div class="t" style="left:857.20px;top:378.45px;font-size:8.8px;color:#2a2a2a;transform:scaleX(0.8855);-webkit-text-stroke:0.15px currentColor;">$0.00</div>
<div class="t" style="left:888.40px;top:378.45px;font-size:8.8px;color:#2a2a2a;transform:scaleX(0.8855);-webkit-text-stroke:0.15px currentColor;">$0.00</div>
<div class="t" style="left:199.70px;top:392.30px;font-size:8.8px;color:#222;font-weight:bold;transform:scaleX(0.9083);">Total</div>
<div class="t" style="left:266.80px;top:392.30px;font-size:8.8px;color:#222;font-weight:bold;transform:scaleX(1.0625);">0</div>
<div class="t" style="left:301.20px;top:392.30px;font-size:8.8px;color:#222;font-weight:bold;transform:scaleX(1.0625);">0</div>
<div class="t" style="left:357.40px;top:392.30px;font-size:8.8px;color:#222;font-weight:bold;transform:scaleX(1.0625);">0</div>
<div class="t" style="left:380.20px;top:392.30px;font-size:8.8px;color:#222;font-weight:bold;transform:scaleX(1.0625);">0</div>
<div class="t" style="left:429.80px;top:392.30px;font-size:8.8px;color:#222;font-weight:bold;transform:scaleX(1.0625);">0</div>
<div class="t" style="left:471.20px;top:392.30px;font-size:8.8px;color:#222;font-weight:bold;transform:scaleX(1.0625);">0</div>
<div class="t" style="left:502.50px;top:392.30px;font-size:8.8px;color:#222;font-weight:bold;transform:scaleX(1.0625);">0</div>
<div class="t" style="left:547.50px;top:392.30px;font-size:8.8px;color:#222;font-weight:bold;transform:scaleX(1.0625);">0</div>
<div class="t" style="left:563.00px;top:392.30px;font-size:8.8px;color:#222;font-weight:bold;transform:scaleX(0.8719);">0 (0:0)</div>
<div class="t" style="left:596.80px;top:392.30px;font-size:8.8px;color:#222;font-weight:bold;transform:scaleX(0.9245);">$NaN</div>
<div class="t" style="left:647.40px;top:392.30px;font-size:8.8px;color:#222;font-weight:bold;transform:scaleX(0.8855);">$0.00</div>
<div class="t" style="left:689.20px;top:392.30px;font-size:8.8px;color:#222;font-weight:bold;transform:scaleX(0.8855);">$0.00</div>
<div class="t" style="left:720.80px;top:392.30px;font-size:8.8px;color:#222;font-weight:bold;transform:scaleX(0.8855);">$0.00</div>
<div class="t" style="left:766.00px;top:392.30px;font-size:8.8px;color:#222;font-weight:bold;transform:scaleX(0.8855);">$0.00</div>
<div class="t" style="left:801.60px;top:392.30px;font-size:8.8px;color:#222;font-weight:bold;transform:scaleX(0.8855);">$0.00</div>
<div class="t" style="left:857.20px;top:392.30px;font-size:8.8px;color:#222;font-weight:bold;transform:scaleX(0.8855);">$0.00</div>
<div class="t" style="left:888.40px;top:392.30px;font-size:8.8px;color:#222;font-weight:bold;transform:scaleX(0.8855);">$0.00</div>
<div class="b" style="left:204.00px;top:408.40px;width:678.20px;height:2.80px;background:#cad6de;border-radius:2px;"></div>
<svg class="b" style="left:197px;top:406px" width="6" height="8" fill="none" stroke="#bbb" stroke-width="0.9"><path d="M4 1.5l-2.2 2.5 2.2 2.5"/></svg>
<svg class="b" style="left:917px;top:406px" width="6" height="8" fill="none" stroke="#333" stroke-width="1"><path d="M1.8 1.5l2.2 2.5-2.2 2.5"/></svg>
<div class="t" style="left:629.50px;top:433.10px;font-size:8.8px;color:#2a2a2a;transform:scaleX(1.0193);-webkit-text-stroke:0.15px currentColor;">Records per page: (1 - 90)</div>
<div class="b" style="left:739.80px;top:427.70px;width:56.50px;height:19.90px;border:1px solid #e4e4e4;border-radius:3px;box-sizing:border-box;"></div>
<div class="t" style="left:746.50px;top:433.10px;font-size:8.8px;color:#2a2a2a;transform:scaleX(1.0727);-webkit-text-stroke:0.15px currentColor;">90</div>
<div class="b" style="left:802.10px;top:427.70px;width:44.30px;height:19.90px;border:1px solid #e4e4e4;border-radius:3px;box-sizing:border-box;"></div>
<div class="t" style="left:812.20px;top:433.10px;font-size:8.8px;color:#2a2a2a;transform:scaleX(1.0902);-webkit-text-stroke:0.15px currentColor;">Apply</div>
<svg class="b" style="left:859px;top:433px" width="8" height="10" fill="none" stroke="#c8c8c8" stroke-width="0.9"><path d="M6 1.5l-3.5 3.5 3.5 3.5"/></svg>
<div class="b" style="left:878.70px;top:427.20px;width:20.70px;height:20.60px;border:1px solid #8fc4ae;border-radius:3px;box-sizing:border-box;"></div>
<div class="t" style="left:887.00px;top:433.10px;font-size:8.8px;color:#2a7d5e;font-weight:bold;transform:scaleX(0.8173);">1</div>
<svg class="b" style="left:911px;top:433px" width="8" height="10" fill="none" stroke="#c8c8c8" stroke-width="0.9"><path d="M2 1.5l3.5 3.5-3.5 3.5"/></svg>
<svg class="b" style="left:0;top:0" width="940" height="450"><line x1="308.4" y1="295.4" x2="192" y2="262.6" stroke="#e0433a" stroke-width="1.4"/><path d="M187.4 261.2L194.6 259.6L192 266.6Z" fill="#e0433a"/></svg>
</body></html>
